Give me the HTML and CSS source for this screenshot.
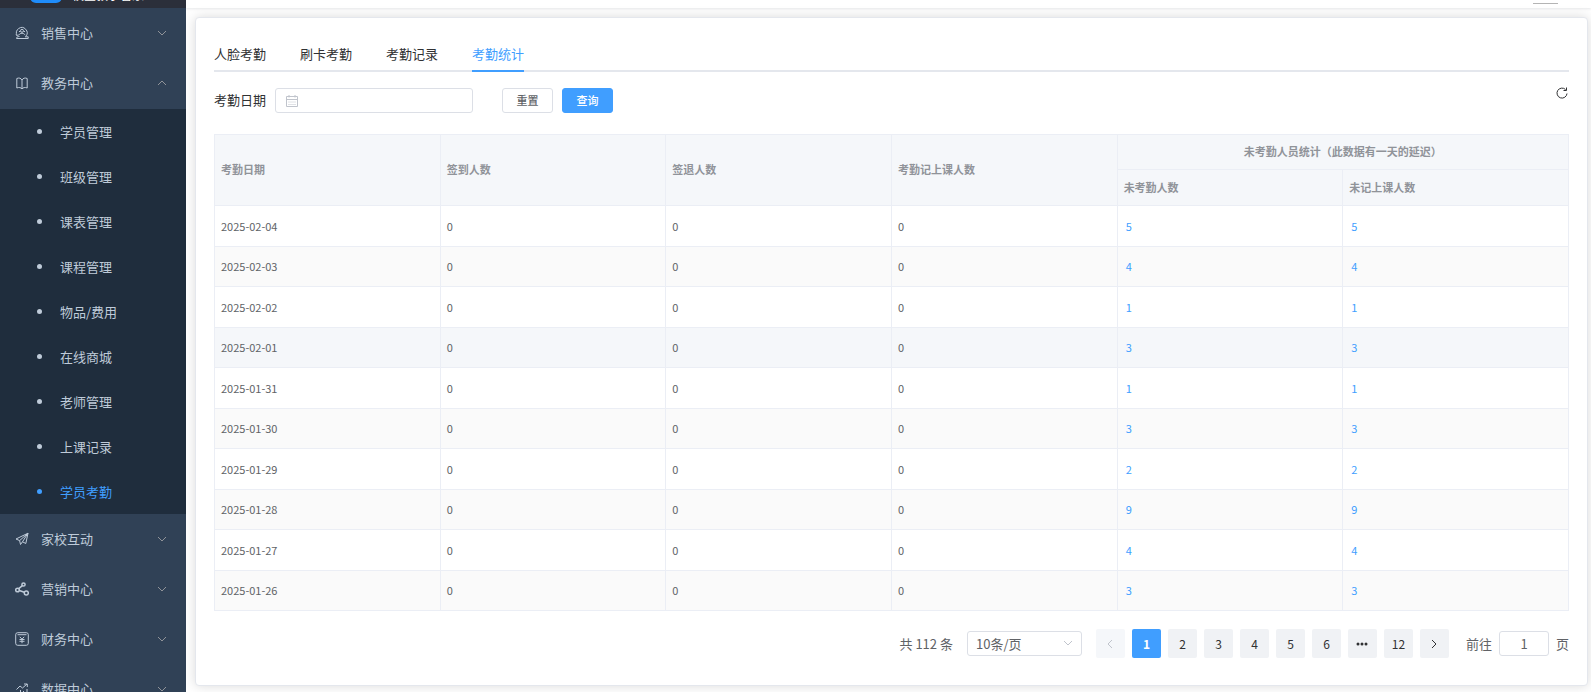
FILE: index.html
```html
<!DOCTYPE html>
<html lang="zh-CN">
<head>
<meta charset="utf-8">
<title>考勤统计</title>
<link rel="stylesheet" href="styles.css">
</head>
<body>
<svg class="sprite" aria-hidden="true">
  <symbol id="down" viewBox="0 0 12 12"><path d="M2 4l4 4 4-4"/></symbol>
  <symbol id="left" viewBox="0 0 12 12"><path d="M8 2L4 6l4 4"/></symbol>
  <symbol id="right" viewBox="0 0 12 12"><path d="M4 2l4 4-4 4"/></symbol>
</svg>
<div class="app">
  <aside class="sidebar">
    <div class="brand"><span class="brand-mark"></span><span class="brand-name">校宝教学管家</span></div>
    <nav class="menu">
      <button class="item" type="button"><svg class="icon" viewBox="0 0 14 14"><path d="M2.200 9.500A5.300 5.300 0 1 1 10.800 10.300M1 8.500l1.300 1.500 1.500-1.200M4.500 10.500c-2 0-3 .8-3 2h11.700v-1.700H10"/><circle cx="7" cy="4.800" r="1.500"/><path d="M4.200 8.800C4.700 6.800 9.300 6.800 9.800 8.800M4 5.500h1M9 5.500h1"/></svg><span>销售中心</span><svg class="arrow"><use href="#down"/></svg></button>
      <button class="item" type="button" aria-expanded="true"><svg class="icon" viewBox="0 0 14 14"><path d="M7 4C6 2.200 4 1.500 1.800 2.500v9.500C4 11 6 11.500 7 13c1-1.500 3-2 5.200-1V2.500C10 1.500 8 2.200 7 4zM7 4v9"/></svg><span>教务中心</span><svg class="arrow up"><use href="#down"/></svg></button>
      <ul class="submenu">
        <li><a href="#">学员管理</a></li>
        <li><a href="#">班级管理</a></li>
        <li><a href="#">课表管理</a></li>
        <li><a href="#">课程管理</a></li>
        <li><a href="#">物品/费用</a></li>
        <li><a href="#">在线商城</a></li>
        <li><a href="#">老师管理</a></li>
        <li><a href="#">上课记录</a></li>
        <li><a class="current" href="#">学员考勤</a></li>
      </ul>
      <button class="item" type="button"><svg class="icon" viewBox="0 0 14 14"><path d="M1 7L13 1.200 10.800 11.500 7.500 9.800 5.500 12.500 4.600 8.600zM4.600 8.600L13 1.200 7.500 9.800"/></svg><span>家校互动</span><svg class="arrow"><use href="#down"/></svg></button>
      <button class="item" type="button"><svg class="icon bold" viewBox="0 0 14 14"><circle cx="2.500" cy="8" r="1.800"/><circle cx="8.500" cy="2.500" r="1.600"/><circle cx="11.300" cy="11" r="2"/><path d="M3.700 6.700L7.400 3.700M4.300 8.500l5 1.800"/></svg><span>营销中心</span><svg class="arrow"><use href="#down"/></svg></button>
      <button class="item" type="button"><svg class="icon" viewBox="0 0 14 14"><rect x=".7" y=".7" width="12.600" height="12.600" rx="2"/><path d="M2.500 2.700h9M4.800 4.800L7 7.200 9.200 4.800M4.500 7.500h5M4.500 9.300h5M7 7.200v4"/></svg><span>财务中心</span><svg class="arrow"><use href="#down"/></svg></button>
      <button class="item" type="button"><svg class="icon" viewBox="0 0 14 14"><path d="M1.500 7.500L5 4l2.500 2L12 2M9 2h3.300v3M2 10v3M5.500 8v5M8.500 9v4M12 7v6"/></svg><span>数据中心</span><svg class="arrow"><use href="#down"/></svg></button>
    </nav>
  </aside>
  <div class="page">
    <header class="topbar"><span class="avatar"></span></header>
    <main class="card">
      <nav class="tabs">
        <a href="#">人脸考勤</a><a href="#">刷卡考勤</a><a href="#">考勤记录</a><a class="active" href="#">考勤统计</a>
      </nav>
      <form class="filters">
        <label for="date">考勤日期</label>
        <span class="datebox"><svg viewBox="0 0 14 14"><path d="M1.500 2.500h11v10h-11zM1.500 5.500h11M4 1v2.500M10 1v2.500"/><path class="dots" d="M3.500 8h7M3.500 10.500h7"/></svg><input id="date" type="text"></span>
        <button class="btn" type="reset">重置</button>
        <button class="btn primary" type="button">查询</button>
        <button class="refresh" type="button" aria-label="刷新"><svg viewBox="0 0 14 14"><path d="M12 7.500A5 5 0 1 1 10.500 3.500M11.500 1.500v3h-3"/></svg></button>
      </form>
      <table class="data">
        <thead>
          <tr class="top"><th rowspan="2">考勤日期</th><th rowspan="2">签到人数</th><th rowspan="2">签退人数</th><th rowspan="2">考勤记上课人数</th><th class="group" colspan="2">未考勤人员统计（此数据有一天的延迟）</th></tr>
          <tr><th>未考勤人数</th><th>未记上课人数</th></tr>
        </thead>
        <tbody>
          <tr><td>2025-02-04</td><td>0</td><td>0</td><td>0</td><td><a href="#">5</a></td><td><a href="#">5</a></td></tr>
          <tr><td>2025-02-03</td><td>0</td><td>0</td><td>0</td><td><a href="#">4</a></td><td><a href="#">4</a></td></tr>
          <tr><td>2025-02-02</td><td>0</td><td>0</td><td>0</td><td><a href="#">1</a></td><td><a href="#">1</a></td></tr>
          <tr class="hovered"><td>2025-02-01</td><td>0</td><td>0</td><td>0</td><td><a href="#">3</a></td><td><a href="#">3</a></td></tr>
          <tr><td>2025-01-31</td><td>0</td><td>0</td><td>0</td><td><a href="#">1</a></td><td><a href="#">1</a></td></tr>
          <tr><td>2025-01-30</td><td>0</td><td>0</td><td>0</td><td><a href="#">3</a></td><td><a href="#">3</a></td></tr>
          <tr><td>2025-01-29</td><td>0</td><td>0</td><td>0</td><td><a href="#">2</a></td><td><a href="#">2</a></td></tr>
          <tr><td>2025-01-28</td><td>0</td><td>0</td><td>0</td><td><a href="#">9</a></td><td><a href="#">9</a></td></tr>
          <tr><td>2025-01-27</td><td>0</td><td>0</td><td>0</td><td><a href="#">4</a></td><td><a href="#">4</a></td></tr>
          <tr><td>2025-01-26</td><td>0</td><td>0</td><td>0</td><td><a href="#">3</a></td><td><a href="#">3</a></td></tr>
        </tbody>
      </table>
      <div class="pagination">
        <span class="total">共 112 条</span>
        <span class="size"><select aria-label="每页条数"><option>10条/页</option></select><svg><use href="#down"/></svg></span>
        <div class="pages">
          <button type="button" disabled aria-label="上一页"><svg><use href="#left"/></svg></button>
          <button type="button" class="on">1</button>
          <button type="button">2</button>
          <button type="button">3</button>
          <button type="button">4</button>
          <button type="button">5</button>
          <button type="button">6</button>
          <button type="button" aria-label="更多"><svg class="more" viewBox="0 0 12 12"><circle cx="2" cy="6" r="1.500"/><circle cx="6" cy="6" r="1.500"/><circle cx="10" cy="6" r="1.500"/></svg></button>
          <button type="button">12</button>
          <button type="button" aria-label="下一页"><svg><use href="#right"/></svg></button>
        </div>
        <label class="jump">前往<input type="text" value="1">页</label>
      </div>
    </main>
  </div>
</div>
</body>
</html>
```
FILE: styles.css
```css
* { box-sizing: border-box; }
body {
  margin: 0;
  background: #fff;
  color: #303133;
  font: 13px/20px "Noto Sans CJK SC", "Noto Sans", sans-serif;
}
button, input, select { margin: 0; font: inherit; color: inherit; }
button { border: 0; cursor: pointer; }
a { color: inherit; text-decoration: none; }
svg { fill: none; stroke: currentColor; }
.sprite { display: none; }
.app { display: flex; height: 100vh; overflow: hidden; }

.sidebar { flex: 0 0 186px; overflow: hidden; background: #304156; color: #bfcbd9; }
.brand {
  display: flex;
  align-items: flex-end;
  gap: 10px;
  height: 8px;
  padding-left: 30px;
  overflow: hidden;
  background: #2b2f3a;
}
.brand-mark { width: 32px; height: 32px; margin-bottom: 5px; border-radius: 6px; background: #1f8cfa; }
.brand-name { font-size: 12px; line-height: 16px; margin-bottom: 5px; color: #fff; }
.item {
  display: flex;
  align-items: center;
  width: 100%;
  height: 50px;
  padding: 0 18px 0 15px;
  background: none;
  text-align: left;
}
.item span { flex: 1; margin-left: 12px; }
.icon { width: 14px; height: 14px; stroke-width: 1; }
.icon.bold { stroke-width: 1.5; }
.arrow { width: 12px; height: 12px; stroke: #909399; }
.arrow.up { transform: rotate(180deg); }
.submenu { margin: 1px 0 0; padding: 0; list-style: none; background: #1f2d3d; }
.submenu a { display: flex; align-items: center; gap: 18px; height: 45px; padding-left: 37px; }
.submenu a::before { content: ""; width: 5px; height: 5px; border-radius: 50%; background: currentColor; }
.submenu .current { color: #409eff; }

.page { flex: 1; min-width: 0; display: flex; flex-direction: column; background: #fff; }
.topbar {
  display: flex;
  flex: 0 0 8px;
  justify-content: flex-end;
  align-items: flex-start;
  padding-right: 33px;
  box-shadow: 0 1px 3px rgba(0, 21, 41, .1);
}
.avatar { width: 25px; height: 4px; border-bottom: 1px solid #b4b4b4; }
.card {
  margin: 9px 3px 0 9px;
  padding: 26px 18px 27px;
  border: 1px solid #e4e7ed;
  border-radius: 4px;
  background: #fff;
  box-shadow: 0 0 12px rgba(0, 0, 0, .15);
}
.tabs { display: flex; gap: 34px; border-bottom: 2px solid #e4e7ed; }
.tabs a { margin-bottom: -2px; padding-bottom: 6px; border-bottom: 2px solid transparent; }
.tabs .active { color: #409eff; border-color: #409eff; }

.filters { display: flex; align-items: flex-end; height: 27px; margin: 14px 0 21px; }
.filters label { align-self: center; }
.datebox {
  display: flex;
  align-items: center;
  width: 198px;
  height: 25px;
  margin: 0 29px 0 9px;
  padding: 0 9px;
  border: 1px solid #dcdfe6;
  border-radius: 3px;
  color: #c0c4cc;
}
.datebox svg { flex: none; width: 14px; height: 14px; }
.dots { stroke-dasharray: 1 1; }
.datebox input { width: 100%; border: 0; outline: 0; background: none; }
.btn {
  width: 51px;
  height: 25px;
  margin-right: 9px;
  padding: 0 0 1px;
  border: 1px solid #dcdfe6;
  border-radius: 3px;
  background: #fff;
  color: #606266;
  font-size: 11px;
  font-weight: 500;
  line-height: 16px;
}
.primary { border-color: #409eff; background: #409eff; color: #fff; }
.refresh { align-self: flex-start; height: 14px; margin-left: auto; padding: 0; background: none; }
.refresh svg { display: block; width: 14px; height: 14px; }

.data {
  width: 100%;
  table-layout: fixed;
  border-collapse: collapse;
  color: #606266;
  font-size: 11px;
  line-height: 16px;
}
.data th, .data td { padding: 0 6px 1px; border: 1px solid #ebeef5; text-align: left; }
.data th { height: 36px; padding-bottom: 2px; background: #f5f7fa; color: #909399; font-weight: 700; }
.data .group { height: 35px; text-align: center; }
.data tbody tr { height: 41px; }
.data tbody tr:nth-child(even) { height: 40px; background: #fafafa; }
.data tbody .hovered:nth-child(even) { background: #f5f7fa; }
.data td a { padding-left: 2px; color: #409eff; }

.pagination {
  display: flex;
  justify-content: flex-end;
  align-items: center;
  gap: 14px;
  margin-top: 18px;
  color: #606266;
}
.size { position: relative; display: flex; }
.size select {
  width: 115px;
  height: 25px;
  padding: 0 8px;
  border: 1px solid #dcdfe6;
  border-radius: 3px;
  background: #fff;
  appearance: none;
}
.size svg { position: absolute; top: 6px; right: 8px; width: 12px; height: 12px; color: #c0c4cc; pointer-events: none; }
.pages { display: flex; gap: 7px; }
.pages button {
  display: grid;
  place-items: center;
  width: 29px;
  height: 29px;
  padding: 0;
  border-radius: 2px;
  background: #f0f2f5;
  color: #303133;
  font-size: 12px;
}
.pages svg { width: 12px; height: 12px; }
.pages .more { fill: currentColor; stroke: none; }
.pages button:disabled { background: #f5f7fa; color: #c0c4cc; }
.pages .on { background: #409eff; color: #fff; font-weight: 700; }
.jump { display: flex; align-items: center; gap: 7px; margin-left: 3px; }
.jump input {
  width: 50px;
  height: 25px;
  border: 1px solid #dcdfe6;
  border-radius: 3px;
  text-align: center;
}
```
